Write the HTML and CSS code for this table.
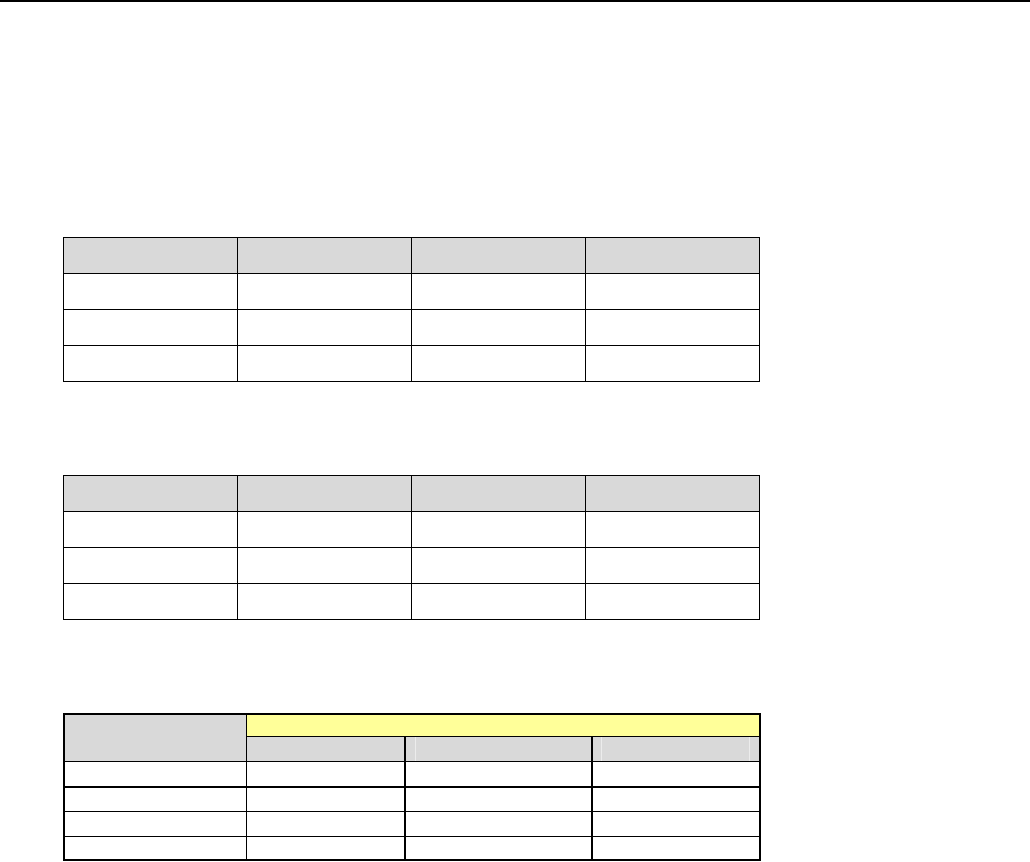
FILE: index.html
```html
<!DOCTYPE html>
<html lang="en">
<head>
<meta charset="utf-8">
<title>Tables</title>
<link rel="stylesheet" href="styles.css">
</head>
<body>
<div class="rule"></div>
<main class="page">
  <div class="grid4">
    <div class="cell head"></div><div class="cell head"></div><div class="cell head"></div><div class="cell head"></div>
    <div class="cell"></div><div class="cell"></div><div class="cell"></div><div class="cell"></div>
    <div class="cell"></div><div class="cell"></div><div class="cell"></div><div class="cell"></div>
    <div class="cell"></div><div class="cell"></div><div class="cell"></div><div class="cell"></div>
  </div>

  <div class="grid4">
    <div class="cell head"></div><div class="cell head"></div><div class="cell head"></div><div class="cell head"></div>
    <div class="cell"></div><div class="cell"></div><div class="cell"></div><div class="cell"></div>
    <div class="cell"></div><div class="cell"></div><div class="cell"></div><div class="cell"></div>
    <div class="cell"></div><div class="cell"></div><div class="cell"></div><div class="cell"></div>
  </div>

  <div class="grid-big">
    <div class="b corner"></div>
    <div class="b banner"></div>
    <div class="b sub c2"></div>
    <div class="b sub c3 mark-l"></div>
    <div class="b sub c4 mark-lr"></div>

    <div class="b c1 row1"></div><div class="b c2 row1"></div><div class="b c3 row1"></div><div class="b c4 row1"></div>
    <div class="b c1"></div><div class="b c2"></div><div class="b c3"></div><div class="b c4"></div>
    <div class="b c1"></div><div class="b c2"></div><div class="b c3"></div><div class="b c4"></div>
    <div class="b c1 last"></div><div class="b c2 last"></div><div class="b c3 last"></div><div class="b c4 last"></div>
  </div>
</main>
</body>
</html>
```

FILE: styles.css
```css
html, body {
  margin: 0;
  padding: 0;
  background: #ffffff;
  font-family: "Liberation Sans", Arial, sans-serif;
}

.rule {
  height: 2px;
  background: #000000;
}

.page {
  padding: 235px 0 0 63px;
  display: flex;
  flex-direction: column;
  align-items: flex-start;
  gap: 93px;
}

/* simple 4x4 tables */
.grid4 {
  display: grid;
  grid-template-columns: repeat(4, 174px);
  grid-auto-rows: 36px;
  border-top: 1px solid #000;
  border-left: 1px solid #000;
}

.cell {
  box-sizing: border-box;
  border-right: 1px solid #000;
  border-bottom: 1px solid #000;
  background: #ffffff;
}

.cell.head {
  background: #d9d9d9;
}

/* table with banner header */
.grid-big {
  display: grid;
  grid-template-columns: 182px 159px 187px 166px;
  grid-template-rows: 22px 25px 26px 24px 25px 22px;
  border: 2px solid #000;
}

.b {
  box-sizing: border-box;
  background: #ffffff;
  border-bottom: 1px solid #000;
}

.c1 { border-right: 1px solid #000; }
.c2 { border-right: 2px solid #000; }
.c3 { border-right: 2px solid #000; }

.corner {
  grid-column: 1;
  grid-row: 1 / span 2;
  background: #d9d9d9;
  border-right: 1px solid #000;
}

.banner {
  grid-column: 2 / span 3;
  grid-row: 1;
  background: #ffff99;
}

.sub {
  background: #d9d9d9;
}

.mark-l {
  background:
    linear-gradient(to right, transparent 9px, #ececec 9px, #ececec 10px, transparent 10px),
    #d9d9d9;
}

.mark-lr {
  background:
    linear-gradient(to right, transparent 8px, #ececec 8px, #ececec 9px, transparent 9px,
                    transparent 156px, #ececec 156px, #ececec 157px, transparent 157px),
    #d9d9d9;
}

.row1 {
  border-bottom-width: 2px;
}

.last {
  border-bottom: none;
}
```
